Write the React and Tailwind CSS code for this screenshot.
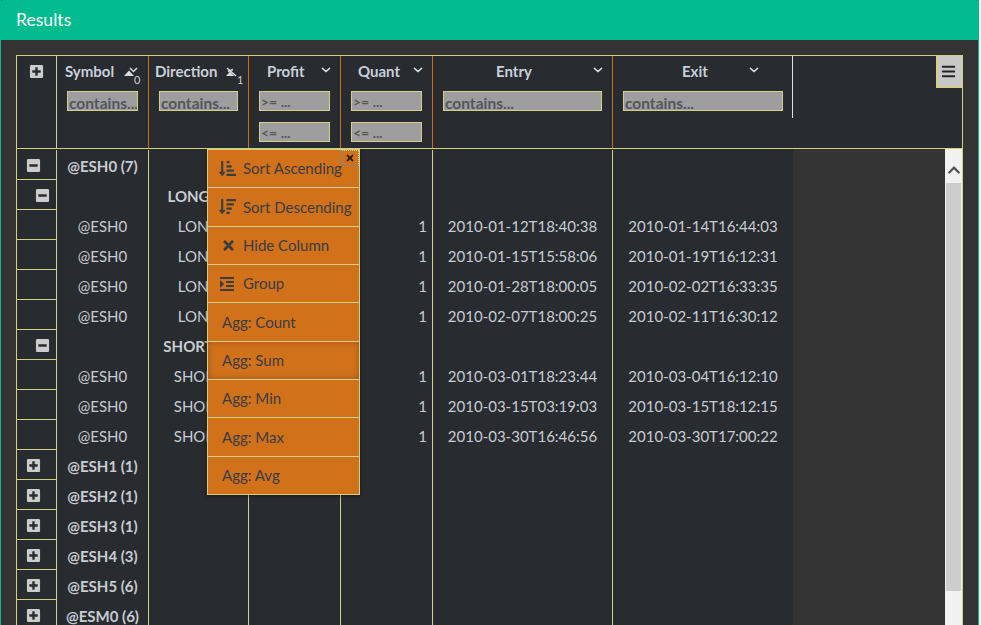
import { FaPlusSquare, FaMinusSquare, FaTimes, FaIndent, FaBars, FaChevronUp, FaSortAmountDown, FaSortAmountDownAlt } from "react-icons/fa";

const trades = {
  long: [
    ["2010-01-12T18:40:38", "2010-01-14T16:44:03"],
    ["2010-01-15T15:58:06", "2010-01-19T16:12:31"],
    ["2010-01-28T18:00:05", "2010-02-02T16:33:35"],
    ["2010-02-07T18:00:25", "2010-02-11T16:30:12"],
  ],
  short: [
    ["2010-03-01T18:23:44", "2010-03-04T16:12:10"],
    ["2010-03-15T03:19:03", "2010-03-15T18:12:15"],
    ["2010-03-30T16:46:56", "2010-03-30T17:00:22"],
  ],
};

const groups = ["@ESH1 (1)", "@ESH2 (1)", "@ESH3 (1)", "@ESH4 (3)", "@ESH5 (6)", "@ESM0 (6)"];

const menu = [
  { label: "Sort Ascending", icon: <FaSortAmountDownAlt className="text-[17px]" /> },
  { label: "Sort Descending", icon: <FaSortAmountDown className="text-[17px]" /> },
  { label: "Hide Column", icon: <FaTimes className="text-[15px] ml-[2px]" /> },
  { label: "Group", icon: <FaIndent className="text-[16px]" /> },
  { label: "Agg: Count" },
  { label: "Agg: Sum", hover: true },
  { label: "Agg: Min" },
  { label: "Agg: Max" },
  { label: "Agg: Avg" },
];

function Chevron({ pos = "right-[9px]" }) {
  return (
    <svg width="10" height="6" viewBox="0 0 10 6" className={`absolute top-[11px] ${pos}`}>
      <path d="M1 1l4 3.5L9 1" fill="none" stroke="#e8e8e8" strokeWidth="1.6" />
    </svg>
  );
}

function SortMark({ n, pos, shape, lines, digit }) {
  return (
    <span className={`absolute top-[11px] ${pos}`}>
      <svg width="14" height="10" viewBox="0 0 14 10" className="block">
        <path d={shape} fill="#d8dce2" />
        <path d={lines} fill="none" stroke="#d8dce2" strokeWidth="1.5" />
      </svg>
      <span className={`absolute top-[7px] text-[11px] leading-[11px] text-[#c8d0da] ${digit}`}>{n}</span>
    </span>
  );
}

function Filter({ text, wide }) {
  const numeric = text.endsWith(" ...");
  return (
    <div className={`h-5 border border-[#d4cf84] bg-[#9e9e9e] text-[#54565b] font-bold pl-px overflow-hidden whitespace-nowrap ${numeric ? "text-[14px] leading-[20px]" : "text-[15.5px] leading-[22px]"} ${wide}`}>
      {text}
    </div>
  );
}

function HeaderCell({ title, width, titleClass, mark, filters, inputWidth }) {
  return (
    <div className={`relative shrink-0 h-[92px] border-r border-[#c8701a] ${width}`}>
      <div className={`absolute top-[5px] text-[15px] font-bold leading-5 text-[#c8d0da] ${titleClass}`}>{title}</div>
      {mark}
      <div className="flex flex-col gap-[11px] pt-[35px] pl-[10px]">
        {filters.map((f) => (
          <Filter key={f} text={f} wide={inputWidth} />
        ))}
      </div>
    </div>
  );
}

function Row({ toggle, indent, symbol, direction, quant, entry, exit, bold }) {
  const Icon = toggle === "minus" ? FaMinusSquare : FaPlusSquare;
  return (
    <div className="flex h-[30px] shrink-0 text-[15px] leading-[33px] text-[#c8ccd2]">
      <div className="w-[39px] shrink-0 border-b border-[#d4cf84] flex items-center">
        {toggle && <Icon className={`mt-[2px] text-[15px] text-[#cccccc] ${indent ? "ml-[18px]" : "ml-[9px]"}`} />}
      </div>
      <div className={`w-[92px] shrink-0 border-l border-[#d4cf84] text-center ${bold === "symbol" ? "font-bold" : ""}`}>{symbol}</div>
      <div className={`w-[100px] shrink-0 border-l border-[#d4cf84] text-center whitespace-nowrap ${bold === "direction" ? "font-bold pr-[20px]" : ""}`}>{direction}</div>
      <div className="w-[92px] shrink-0 border-l border-[#d4cf84]" />
      <div className="w-[92px] shrink-0 border-l border-[#d4cf84] text-right pr-[5px]">{quant}</div>
      <div className="w-[180px] shrink-0 border-l border-[#d4cf84] text-center">{entry}</div>
      <div className="w-[181px] shrink-0 border-l border-[#d4cf84] text-center">{exit}</div>
    </div>
  );
}

export default function App() {
  return (
    <div className="w-[981px] h-[625px] overflow-hidden bg-[#f4f6f8] font-['Lato',sans-serif]">
      <div className="w-[979px] h-[625px] flex flex-col bg-[#333333] border-x border-[#00bb8e]">
        <div className="h-[40px] shrink-0 bg-[#00bb8e] -mx-px rounded-t-[3px] pl-[16px] text-[17.6px] leading-[40px] text-white">Results</div>

        <div className="mt-[15px] ml-[15px] w-[947px] flex-1 min-h-0 flex flex-col border-x border-t border-[#d4cf84]">
          {/* header */}
          <div className="relative flex h-[93px] shrink-0 border-b border-[#d4cf84] bg-[#282b30]">
            <div className="w-[40px] shrink-0 border-r border-[#d4cf84] h-[92px]">
              <FaPlusSquare className="text-[15px] text-[#cccccc] ml-[12px] mt-[8px]" />
            </div>
            <HeaderCell title="Symbol" width="w-[92px]" titleClass="left-[8px]" mark={<SortMark n="0" pos="right-[10px]" shape="M0 9L5 3.5L10 9Z" lines="M6 1l3.5 3.5L13 1" digit="left-[10px]" />} filters={["contains..."]} inputWidth="w-[71px]" />
            <HeaderCell title="Direction" width="w-[100px]" titleClass="left-[6px]" mark={<SortMark n="1" pos="right-[11px]" shape="M3 9L7 4.5L11 9Z" lines="M4 1l9 8M5 4.5l5-2" digit="left-[14px]" />} filters={["contains..."]} inputWidth="w-[79px]" />
            <HeaderCell title="Profit" width="w-[92px]" titleClass="left-[18px]" mark={<Chevron />} filters={[">= ...", "<= ..."]} inputWidth="w-[71px]" />
            <HeaderCell title="Quant" width="w-[92px]" titleClass="left-[17px]" mark={<Chevron />} filters={[">= ...", "<= ..."]} inputWidth="w-[71px]" />
            <HeaderCell title="Entry" width="w-[180px]" titleClass="left-[63px]" mark={<Chevron />} filters={["contains..."]} inputWidth="w-[159px]" />
            <div className="relative shrink-0 w-[180px] h-[62px] border-r border-[#e0e0e0]">
              <div className="absolute top-[5px] left-[69px] text-[15px] font-bold leading-5 text-[#c8d0da]">Exit</div>
              <Chevron pos="right-[33px]" />
              <div className="pt-[35px] pl-[10px]">
                <Filter text="contains..." wide="w-[160px]" />
              </div>
            </div>
            <div className="absolute right-0 top-0 w-[26px] h-[32px] pr-[4px] bg-[#c8c8c8] border-l-2 border-b-2 border-[#d4cf84] flex items-center justify-center">
              <FaBars className="text-[15px] text-[#222428]" />
            </div>
          </div>

          {/* body */}
          <div className="relative flex-1 min-h-0 overflow-hidden">
            <div className="w-[776px] h-full pt-px flex flex-col bg-[#282b30]">
              <Row toggle="minus" symbol="@ESH0 (7)" bold="symbol" />
              <Row toggle="minus" indent direction="LONG" bold="direction" />
              {trades.long.map((t) => (
                <Row key={t[0]} symbol="@ESH0" direction="LONG" quant="1" entry={t[0]} exit={t[1]} />
              ))}
              <Row toggle="minus" indent direction="SHORT" bold="direction" />
              {trades.short.map((t) => (
                <Row key={t[0]} symbol="@ESH0" direction="SHORT" quant="1" entry={t[0]} exit={t[1]} />
              ))}
              {groups.map((g) => (
                <Row key={g} toggle="plus" symbol={g} bold="symbol" />
              ))}
            </div>

            {/* column menu */}
            <div className="absolute left-[190px] top-0 w-[153px] h-[346px] flex flex-col bg-[#d1711a] border border-[#d4cf84] shadow-[0_1px_4px_rgba(0,0,0,0.4)] text-[15px] text-[#3a3d42]">
              {menu.map((m, i) => (
                <div
                  key={m.label}
                  className={`flex-1 flex items-center border-[#d4cf84] ${i < menu.length - 1 ? "border-b" : ""} ${m.hover ? "shadow-[inset_0_0_6px_rgba(90,60,20,0.45)]" : ""} ${m.icon ? "pl-[11px]" : "pl-[14px]"}`}
                >
                  {m.icon && <span className="w-[24px] shrink-0 flex justify-start">{m.icon}</span>}
                  <span className="whitespace-nowrap">{m.label}</span>
                </div>
              ))}
              <div className="absolute right-0 top-0 w-[19px] h-[16px] border border-dotted border-t-[#d4cf84] border-r-[#d4cf84] border-b-[#4a8fd0] border-l-[#4a8fd0] flex items-center justify-center">
                <FaTimes className="text-[10px] text-[#2a1a08]" />
              </div>
            </div>

            {/* scrollbar */}
            <div className="absolute right-0 top-0 bottom-0 w-[17px] bg-[#f1f1f1] flex flex-col items-center">
              <FaChevronUp className="text-[14px] text-[#505050] mt-[14px]" />
              <div className="mt-[6px] w-[15px] h-[408px] bg-[#cdcdcd]" />
            </div>
          </div>
        </div>
      </div>
    </div>
  );
}
